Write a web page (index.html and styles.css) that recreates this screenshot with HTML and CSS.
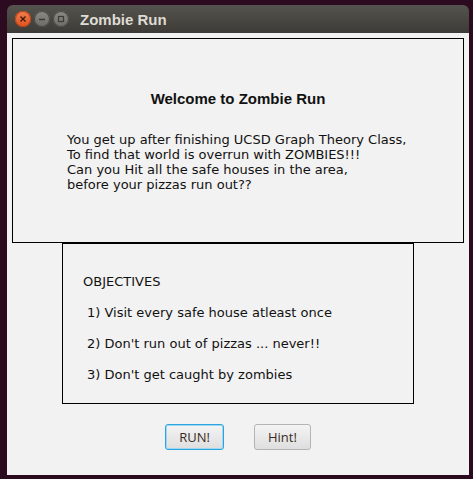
FILE: index.html
```html
<!DOCTYPE html>
<html lang="en">
<head>
  <meta charset="UTF-8" />
  <title>Zombie Run</title>
  <link rel="stylesheet" href="styles.css">
</head>
<body>
  <div class="window">
    <div class="titlebar">
      <div class="controls">
        <span class="ctl close">
          <svg width="10" height="10" viewBox="0 0 10 10"><path d="M2.5 2.5 L7.5 7.5 M7.5 2.5 L2.5 7.5" stroke="#3a1a0e" stroke-width="1.3"/></svg>
        </span>
        <span class="ctl">
          <svg width="10" height="10" viewBox="0 0 10 10"><path d="M2 5.5 H8" stroke="#3c3b37" stroke-width="1.3"/></svg>
        </span>
        <span class="ctl">
          <svg width="10" height="10" viewBox="0 0 10 10"><rect x="2.5" y="2.5" width="5" height="5" fill="none" stroke="#3c3b37" stroke-width="1.2"/></svg>
        </span>
      </div>
      <span class="title">Zombie Run</span>
    </div>

    <div class="content">
      <div class="intro">
        <h1>Welcome to Zombie Run</h1>
        <p>
          You get up after finishing UCSD Graph Theory Class,<br>
          To find that world is overrun with ZOMBIES!!!<br>
          Can you Hit all the safe houses in the area,<br>
          before your pizzas run out??
        </p>
      </div>

      <div class="objectives">
        <h2>OBJECTIVES</h2>
        <ul>
          <li>1) Visit every safe house atleast once</li>
          <li>2) Don't run out of pizzas ... never!!</li>
          <li>3) Don't get caught by zombies</li>
        </ul>
      </div>

      <div class="actions">
        <button type="button" class="focused">RUN!</button>
        <button type="button">Hint!</button>
      </div>
    </div>
  </div>
</body>
</html>
```

FILE: styles.css
```css
body {
  margin: 0;
  background-color: #2c0a1f;
  font-family: "DejaVu Sans", sans-serif;
}

.window {
  width: 462px;
  height: 470px;
  margin: 5px 0 0 7px;
  border-radius: 6px 6px 0 0;
  overflow: hidden;
}

.titlebar {
  height: 28px;
  display: flex;
  align-items: center;
  background: linear-gradient(#55534d, #3c3b37);
}

.controls {
  display: flex;
  gap: 3px;
  margin-left: 8px;
}

.ctl {
  width: 16px;
  height: 16px;
  border-radius: 50%;
  display: flex;
  align-items: center;
  justify-content: center;
  background: linear-gradient(#8b8a85, #6c6b66);
  box-shadow: inset 0 0 0 1px #4a4944;
}

.ctl.close {
  background: linear-gradient(#f37e4f, #e0531e);
  box-shadow: inset 0 0 0 1px #b9441a;
}

.title {
  margin-left: 11px;
  color: #dfdbd2;
  font-family: "Liberation Sans", Arial, sans-serif;
  font-weight: bold;
  font-size: 15px;
}

.content {
  height: 442px;
  box-sizing: border-box;
  padding-top: 5px;
  background-color: #f2f2f2;
  display: flex;
  flex-direction: column;
  align-items: center;
}

.intro {
  width: 452px;
  height: 205px;
  box-sizing: border-box;
  border: 1px solid #000;
  padding: 0 0 0 54px;
}

.intro h1 {
  margin: 52px 0 0 -54px;
  text-align: center;
  font-family: "Liberation Sans", Arial, sans-serif;
  font-size: 15px;
  font-weight: bold;
  line-height: 16px;
  color: #111;
}

.intro p {
  margin: 25px 0 0;
  font-size: 13px;
  line-height: 15px;
  color: #111;
}

.objectives {
  width: 352px;
  height: 161px;
  box-sizing: border-box;
  border: 1px solid #000;
  padding: 30px 0 0 20px;
  font-size: 13px;
  color: #111;
}

.objectives h2 {
  margin: 0;
  font-size: 13px;
  font-weight: normal;
  line-height: 16px;
}

.objectives ul {
  list-style: none;
  margin: 15px 0 0 4px;
  padding: 0;
}

.objectives li {
  line-height: 16px;
  margin-bottom: 15px;
}

.actions {
  display: flex;
  gap: 30px;
  margin-top: 20px;
}

button {
  height: 26px;
  padding: 0 13px;
  font-family: "Open Sans", sans-serif;
  font-size: 13px;
  color: #3a2c24;
  background: linear-gradient(#f4f4f4, #dedede);
  border: 1px solid #b4b4b4;
  border-radius: 3px;
}

button.focused {
  border-color: #2aa4de;
  box-shadow: 0 0 0 1px #9fd8f2 inset;
}
```
